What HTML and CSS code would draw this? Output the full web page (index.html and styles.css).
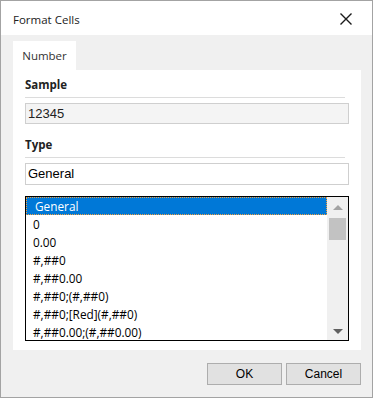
FILE: index.html
```html
<!DOCTYPE html>
<html lang="en">
<head>
    <meta charset="UTF-8">
    <meta name="viewport" content="width=device-width, initial-scale=1.0">
    <title>Format Cells</title>
    <link rel="stylesheet" href="styles.css">
</head>
<body>
    <div class="dialog">
        <div class="title-bar">
            <span class="title">Format Cells</span>
            <svg class="close" width="12" height="12" viewBox="0 0 12 12">
                <path d="M0.5 0.5 L11.5 11.5 M11.5 0.5 L0.5 11.5" stroke="#1a1a1a" stroke-width="1.4" fill="none"/>
            </svg>
        </div>
        <div class="content">
            <div class="tabs">
                <div class="tab active">Number</div>
            </div>
            <div class="panel">
                <div class="label">Sample</div>
                <div class="sample">12345</div>
                <div class="label label-type">Type</div>
                <div class="type-input">General</div>
                <div class="listbox">
                    <ul class="items">
                        <li class="selected">General</li>
                        <li>0</li>
                        <li>0.00</li>
                        <li>#,##0</li>
                        <li>#,##0.00</li>
                        <li>#,##0;(#,##0)</li>
                        <li>#,##0;[Red](#,##0)</li>
                        <li>#,##0.00;(#,##0.00)</li>
                    </ul>
                    <div class="scrollbar">
                        <span class="arrow up"></span>
                        <span class="thumb"></span>
                        <span class="spacer"></span>
                        <span class="arrow down"></span>
                    </div>
                </div>
            </div>
            <div class="buttons">
                <button>OK</button>
                <button>Cancel</button>
            </div>
        </div>
    </div>
</body>
</html>
```

FILE: styles.css
```css
* {
    margin: 0;
    padding: 0;
    box-sizing: border-box;
}
body {
    font-family: "Open Sans", "Noto Sans", sans-serif;
    font-size: 12px;
    color: #000;
    background-color: #fff;
    overflow: hidden;
}
.dialog {
    width: 373px;
    height: 398px;
    border: 1px solid #a3a3a3;
    display: flex;
    flex-direction: column;
    background-color: #f0f0f0;
}
.title-bar {
    height: 34px;
    background-color: #fff;
    display: flex;
    align-items: center;
    justify-content: space-between;
    padding: 0 20px 0 12px;
}
.title {
    font-size: 11.5px;
    color: #222;
    margin-top: 2px;
}
.close {
    margin-top: 2px;
}
.content {
    flex: 1;
    padding: 6px 11px 0 12px;
    display: flex;
    flex-direction: column;
}
.tabs {
    display: flex;
}
.tab {
    width: 63px;
    height: 29px;
    background-color: #fff;
    display: flex;
    align-items: center;
    justify-content: center;
    font-size: 11.5px;
    color: #333;
}
.panel {
    background-color: #fff;
    padding: 5px 12px 9px 12px;
    display: flex;
    flex-direction: column;
}
.label {
    font-weight: bold;
    font-size: 11.5px;
    line-height: 20px;
    width: 320px;
    padding-bottom: 2px;
    border-bottom: 1px solid #dcdcdc;
    color: #222;
}
.label-type {
    margin-top: 11px;
}
.sample,
.type-input {
    margin-top: 5px;
    height: 21px;
    border: 1px solid #cfcfcf;
    padding-left: 2px;
    line-height: 19px;
    font-family: "Liberation Sans", Arial, sans-serif;
    font-size: 13px;
}
.sample {
    background-color: #f4f4f4;
    color: #222;
}
.type-input {
    height: 22px;
    line-height: 20px;
}
.listbox {
    margin-top: 11px;
    height: 145px;
    border: 1px solid #000;
    display: flex;
    overflow: hidden;
}
.items {
    list-style: none;
    flex: 1;
}
.items li {
    height: 18px;
    line-height: 18px;
    padding-left: 7px;
    white-space: nowrap;
    font-size: 11.8px;
}
.items li.selected {
    background-color: #0078d7;
    color: #fff;
    padding-left: 9px;
    outline: 1px dotted #f0a040;
    outline-offset: -1px;
}
.scrollbar {
    width: 21px;
    background-color: #f0f0f0;
    display: flex;
    flex-direction: column;
    align-items: center;
    padding: 8px 0 6px;
}
.arrow {
    width: 0;
    height: 0;
    border-left: 5px solid transparent;
    border-right: 5px solid transparent;
}
.arrow.up {
    border-bottom: 5px solid #a3a3a3;
}
.arrow.down {
    border-top: 5px solid #606060;
}
.thumb {
    width: 17px;
    height: 22px;
    background-color: #c2c2c2;
    margin-top: 8px;
}
.spacer {
    flex: 1;
}
.buttons {
    display: flex;
    justify-content: flex-end;
    gap: 4px;
    margin-top: 13px;
}
button {
    width: 75px;
    height: 22px;
    font-family: "Liberation Sans", Arial, sans-serif;
    font-size: 12px;
    background-color: #e1e1e1;
    border: 1px solid #adadad;
    color: #000;
}
```
